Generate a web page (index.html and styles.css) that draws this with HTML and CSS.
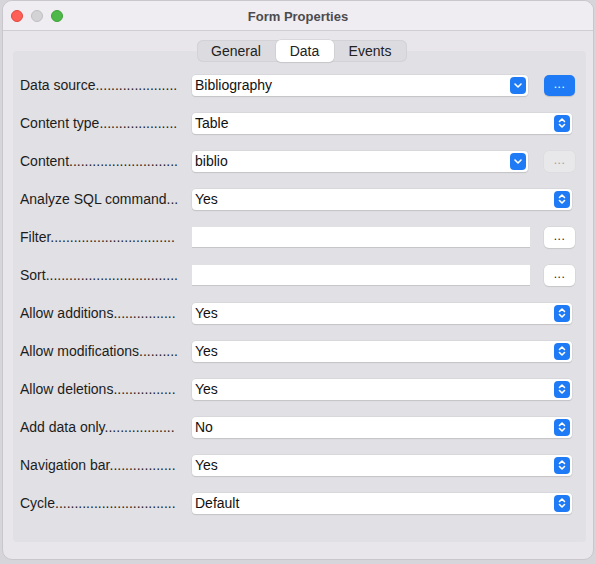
FILE: index.html
```html
<!DOCTYPE html>
<html>
<head>
<meta charset="utf-8">
<link rel="stylesheet" href="styles.css">
</head>
<body>
<div class="window">
  <div class="titlebar">
    <div class="lights">
      <span class="light red"></span>
      <span class="light gray"></span>
      <span class="light green"></span>
    </div>
    <div class="title">Form Properties</div>
    <div></div>
  </div>
  <div class="content">
    <div class="tabs">
      <span class="tab t-general">General</span>
      <span class="tab t-data active">Data</span>
      <span class="tab t-events">Events</span>
    </div>
    <div class="panel">
      <div class="row">
        <div class="label">Data source.....................</div>
        <div class="field combo"><span>Bibliography</span><span class="knob"><svg width="16" height="16" viewBox="0 0 16 16"><polyline points="5,7 8,10 11,7" /></svg></span></div>
        <div class="dots primary">...</div>
      </div>
      <div class="row">
        <div class="label">Content type....................</div>
        <div class="field combo spin"><span>Table</span><span class="knob"><svg width="16" height="16" viewBox="0 0 16 16"><polyline points="5.5,6.5 8,4 10.5,6.5" /><polyline points="5.5,9.5 8,12 10.5,9.5" /></svg></span></div>
      </div>
      <div class="row">
        <div class="label">Content............................</div>
        <div class="field combo"><span>biblio</span><span class="knob"><svg width="16" height="16" viewBox="0 0 16 16"><polyline points="5,7 8,10 11,7" /></svg></span></div>
        <div class="dots disabled">...</div>
      </div>
      <div class="row">
        <div class="label">Analyze SQL command...</div>
        <div class="field combo spin"><span>Yes</span><span class="knob"><svg width="16" height="16" viewBox="0 0 16 16"><polyline points="5.5,6.5 8,4 10.5,6.5" /><polyline points="5.5,9.5 8,12 10.5,9.5" /></svg></span></div>
      </div>
      <div class="row">
        <div class="label">Filter................................</div>
        <div class="field text"></div>
        <div class="dots">...</div>
      </div>
      <div class="row">
        <div class="label">Sort..................................</div>
        <div class="field text"></div>
        <div class="dots">...</div>
      </div>
      <div class="row">
        <div class="label">Allow additions................</div>
        <div class="field combo spin"><span>Yes</span><span class="knob"><svg width="16" height="16" viewBox="0 0 16 16"><polyline points="5.5,6.5 8,4 10.5,6.5" /><polyline points="5.5,9.5 8,12 10.5,9.5" /></svg></span></div>
      </div>
      <div class="row">
        <div class="label">Allow modifications..........</div>
        <div class="field combo spin"><span>Yes</span><span class="knob"><svg width="16" height="16" viewBox="0 0 16 16"><polyline points="5.5,6.5 8,4 10.5,6.5" /><polyline points="5.5,9.5 8,12 10.5,9.5" /></svg></span></div>
      </div>
      <div class="row">
        <div class="label">Allow deletions................</div>
        <div class="field combo spin"><span>Yes</span><span class="knob"><svg width="16" height="16" viewBox="0 0 16 16"><polyline points="5.5,6.5 8,4 10.5,6.5" /><polyline points="5.5,9.5 8,12 10.5,9.5" /></svg></span></div>
      </div>
      <div class="row">
        <div class="label">Add data only..................</div>
        <div class="field combo spin"><span>No</span><span class="knob"><svg width="16" height="16" viewBox="0 0 16 16"><polyline points="5.5,6.5 8,4 10.5,6.5" /><polyline points="5.5,9.5 8,12 10.5,9.5" /></svg></span></div>
      </div>
      <div class="row">
        <div class="label">Navigation bar.................</div>
        <div class="field combo spin"><span>Yes</span><span class="knob"><svg width="16" height="16" viewBox="0 0 16 16"><polyline points="5.5,6.5 8,4 10.5,6.5" /><polyline points="5.5,9.5 8,12 10.5,9.5" /></svg></span></div>
      </div>
      <div class="row">
        <div class="label">Cycle...............................</div>
        <div class="field combo spin"><span>Default</span><span class="knob"><svg width="16" height="16" viewBox="0 0 16 16"><polyline points="5.5,6.5 8,4 10.5,6.5" /><polyline points="5.5,9.5 8,12 10.5,9.5" /></svg></span></div>
      </div>
    </div>
  </div>
</div>
</body>
</html>
```

FILE: styles.css
```css
html, body {
  margin: 0;
  padding: 0;
}
body {
  width: 596px;
  height: 564px;
  background: #d6d5d9;
  font-family: "Liberation Sans", Arial, sans-serif;
  font-size: 14px;
  color: #1e1e1e;
  overflow: hidden;
}
.window {
  box-sizing: border-box;
  margin-left: 2px;
  width: 592px;
  height: 560px;
  background: #e8e6ea;
  border: 1px solid #c9c7cc;
  border-radius: 10px;
  overflow: hidden;
}
.titlebar {
  height: 29px;
  background: #efedf1;
  border-bottom: 1px solid #d0ced3;
  display: grid;
  grid-template-columns: 1fr auto 1fr;
  align-items: center;
}
.lights {
  display: flex;
  gap: 8px;
  padding-left: 8px;
  padding-top: 1px;
}
.light {
  width: 12px;
  height: 12px;
  border-radius: 50%;
  box-sizing: border-box;
}
.red { background: #fe5f57; border: 1px solid #e2463f; }
.gray { background: #d3d2d5; border: 1px solid #bfbec2; }
.green { background: #4eb84a; border: 1px solid #3ea23a; }
.title {
  font-weight: bold;
  color: #4c4b4f;
  font-size: 13px;
  padding-top: 1px;
}
.content {
  padding: 0 5px 0 10px;
}
.tabs {
  position: relative;
  z-index: 1;
  margin: 9px auto 0;
  width: 210px;
  height: 22px;
  display: flex;
  background: #dcdbdf;
  border-radius: 6px;
  box-shadow: inset 0 0 0 1px #d3d2d6;
  transform: translateX(1px);
}
.tab {
  display: flex;
  align-items: center;
  justify-content: center;
  height: 22px;
  box-sizing: border-box;
  font-size: 14px;
  color: #222;
}
.t-general { width: 79px; }
.t-data { width: 58px; }
.t-events { width: 73px; }
.tab.active {
  background: #ffffff;
  border-radius: 5px;
  box-shadow: 0 0 0 0.5px #c9c8cc, 0 1px 1px rgba(0,0,0,0.12);
}
.panel {
  margin-top: -11px;
  width: 573px;
  height: 491px;
  box-sizing: border-box;
  background: #e1e0e4;
  border-radius: 4px;
  padding: 15px 11px 0 7px;
}
.row {
  height: 38px;
  display: flex;
  align-items: center;
}
.label {
  width: 172px;
  flex: none;
  white-space: nowrap;
  font-size: 14px;
  color: #1c1c1c;
}
.field {
  flex: 1;
  height: 21px;
  box-sizing: border-box;
  background: #ffffff;
  font-size: 14px;
  color: #111;
}
.combo {
  display: flex;
  align-items: center;
  justify-content: space-between;
  padding: 0 2px 0 3px;
  border-radius: 4px;
  box-shadow: 0 0 0 0.5px #d0cfd3, 0 1px 1px rgba(0,0,0,0.18);
}
.combo.spin {
  margin-right: 3px;
}
.knob {
  width: 16px;
  height: 17px;
  background: #1f7bf5;
  border-radius: 4px;
  display: flex;
  align-items: center;
  justify-content: center;
}
.knob svg polyline {
  fill: none;
  stroke: #ffffff;
  stroke-width: 1.6;
  stroke-linecap: round;
  stroke-linejoin: round;
}
.text {
  border-bottom: 1px solid #c6c5c9;
}
.dots {
  flex: none;
  width: 31px;
  margin-left: 14px;
  height: 21px;
  box-sizing: border-box;
  display: flex;
  align-items: center;
  justify-content: center;
  border-radius: 5px;
  background: #ffffff;
  box-shadow: 0 0 0 0.5px #d0cfd3, 0 1px 1px rgba(0,0,0,0.15);
  font-size: 12px;
  letter-spacing: 0.5px;
  color: #222;
  padding-bottom: 2px;
}
.combo + .dots {
  margin-left: 16px;
}
.dots.primary {
  background: #1f7bf5;
  color: #ffffff;
  box-shadow: 0 1px 1px rgba(0,0,0,0.15);
}
.dots.disabled {
  background: #e8e7ea;
  color: #9e9da1;
  box-shadow: 0 0 0 0.5px #dad9dd;
}
```
